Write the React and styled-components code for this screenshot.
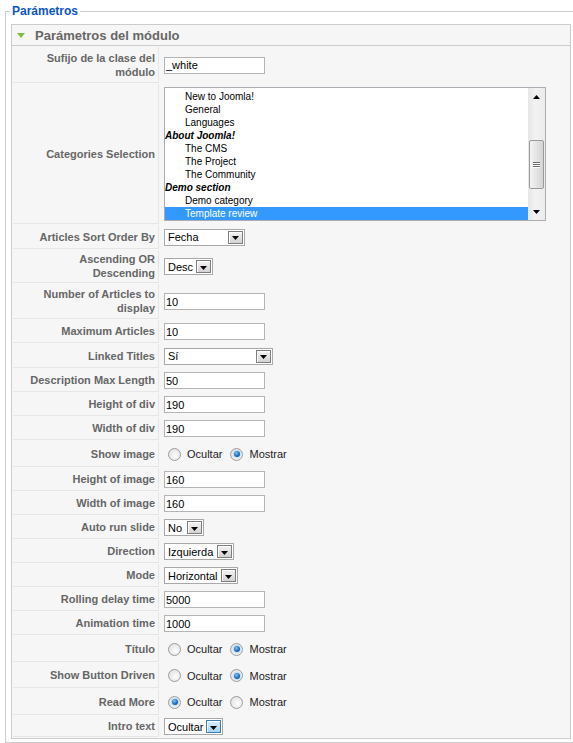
import React from 'react'
import styled, { createGlobalStyle } from 'styled-components'

const GlobalStyle = createGlobalStyle`
  html, body {
    margin: 0;
    padding: 0;
    background: #fff;
    overflow: hidden;
  }
  body {
    font-family: 'Liberation Sans', Arial, sans-serif;
    font-size: 11px;
    color: #333;
  }
`

// the right edge of the fieldset is cut off in the page, so no right border
const Fieldset = styled.fieldset`
  margin: 4px 0 0 5px;
  padding: 6px 0 3px 5px;
  width: 562px;
  border: 1px solid #ccc;
  border-right: 0;
`

const Legend = styled.legend`
  margin-left: -1px;
  padding: 0 2px;
  color: #0b55c4;
  font-size: 12px;
  font-weight: bold;
  line-height: 14px;
`

const Panel = styled.div`
  width: 558px;
  border: 1px solid #ccc;
  background: #f6f6f6;
`

const PanelTitle = styled.h3`
  display: flex;
  align-items: center;
  height: 20px;
  margin: 0;
  padding-left: 5px;
  border-bottom: 1px solid #ccc;
  color: #666;
  font-size: 13px;
  font-weight: bold;
  svg {
    margin-right: 10px;
  }
`

const ParamList = styled.div`
  display: flex;
  flex-direction: column;
  gap: 1px;
  padding: 1px;
`

const Row = styled.div`
  display: grid;
  grid-template-columns: 146px 1fr;
  column-gap: 1px;
  height: ${p => p.$h}px;
`

const Key = styled.div`
  display: flex;
  align-items: center;
  justify-content: flex-end;
  box-sizing: border-box;
  padding: 0 3px 0 6px;
  border-right: 1px solid #e6e6e6;
  border-bottom: 1px solid #e6e6e6;
  color: #666;
  font-weight: bold;
  line-height: 14px;
  text-align: right;
`

const Value = styled.div`
  display: flex;
  align-items: center;
  padding-left: 4px;
`

const TextInput = styled.input`
  width: 101px;
  height: 17px;
  box-sizing: border-box;
  margin: 0;
  padding: 0 1px;
  border: 1px solid #b4b4b4;
  background: #fff;
  font: 11px 'Liberation Sans', Arial, sans-serif;
  color: #000;
  outline: 0;
`

const Select = styled.div`
  display: flex;
  align-items: center;
  width: ${p => p.$w}px;
  height: 17px;
  box-sizing: border-box;
  border: 1px solid #a9a9a9;
  background: #fff;
  color: #000;
`

const SelectText = styled.span`
  flex: 1;
  padding-left: 3px;
  white-space: nowrap;
  overflow: hidden;
`

const DropButton = styled.span`
  display: flex;
  align-items: center;
  justify-content: center;
  flex-shrink: 0;
  width: 15px;
  height: 13px;
  margin: 0 1px 0 2px;
  box-sizing: border-box;
  border: 1px solid ${p => (p.$focus ? '#3c7fb1' : '#7e7e7e')};
  background: ${p =>
    p.$focus ? 'linear-gradient(#d9effc, #a8d2f2)' : 'linear-gradient(#f4f4f4, #d2d2d2)'};
  box-shadow: inset 1px 1px 0 #fff;
  svg {
    margin-top: 2px;
  }
`

const ListBox = styled.div`
  display: flex;
  width: 382px;
  height: 134px;
  box-sizing: border-box;
  border: 1px solid #abadb3;
  background: #fff;
`

const Options = styled.div`
  flex: 1;
  padding-top: 2px;
  overflow: hidden;
`

const Option = styled.div`
  height: 13px;
  line-height: 13px;
  padding-left: ${p => (p.$group ? 0 : 20)}px;
  font-size: 10px;
  font-weight: ${p => (p.$group ? 'bold' : 'normal')};
  font-style: ${p => (p.$group ? 'italic' : 'normal')};
  background: ${p => (p.$selected ? '#3399ff' : 'transparent')};
  color: ${p => (p.$selected ? '#fff' : '#000')};
  white-space: nowrap;
`

const ScrollBar = styled.div`
  display: flex;
  flex-direction: column;
  width: 17px;
  background: linear-gradient(90deg, #e6e6e6, #f2f2f2 40%, #ececec);
`

const ScrollArrow = styled.div`
  display: flex;
  align-items: center;
  justify-content: center;
  height: 17px;
`

const Track = styled.div`
  flex: 1;
  padding-top: 35px;
`

const Thumb = styled.div`
  display: flex;
  flex-direction: column;
  align-items: center;
  justify-content: center;
  gap: 1px;
  height: 49px;
  margin: 0 1px;
  box-sizing: border-box;
  border: 1px solid #9a9a9a;
  border-radius: 2px;
  background: linear-gradient(90deg, #f4f4f4, #e4e4e4 50%, #d4d4d4);
`

const Grip = styled.span`
  width: 7px;
  height: 1px;
  background: #6a6a6a;
  box-shadow: 0 1px 0 #fff;
`

const RadioGroup = styled.div`
  display: flex;
  align-items: center;
  gap: 4px;
`

const RadioOption = styled.label`
  display: flex;
  align-items: center;
  padding-left: 4px;
  color: #222;
  font-size: 11px;
`

const Radio = styled.span`
  display: flex;
  align-items: center;
  justify-content: center;
  width: 13px;
  height: 13px;
  margin-right: 6px;
  box-sizing: border-box;
  border: 1px solid #9c9c9c;
  border-radius: 50%;
  background: radial-gradient(circle at 60% 60%, #fdfdfd, #e2e2e2 80%);
  &::after {
    content: '';
    display: ${p => (p.$checked ? 'block' : 'none')};
    width: 6px;
    height: 6px;
    border-radius: 50%;
    background: radial-gradient(circle at 40% 35%, #7fc6f5, #1c6cb8 55%, #0c3d73);
    box-shadow: 0 0 1px 1px #b9dcf5;
  }
`

const Arrow = ({ up }) => (
  <svg width="7" height="4" viewBox="0 0 7 4">
    <polygon points={up ? '0,4 7,4 3.5,0' : '0,0 7,0 3.5,4'} fill="#000" />
  </svg>
)

const FakeSelect = ({ w, text, focus }) => (
  <Select $w={w}>
    <SelectText>{text}</SelectText>
    <DropButton $focus={focus}>
      <Arrow />
    </DropButton>
  </Select>
)

const Radios = ({ checked }) => (
  <RadioGroup>
    <RadioOption>
      <Radio $checked={checked === 0} />
      Ocultar
    </RadioOption>
    <RadioOption>
      <Radio $checked={checked === 1} />
      Mostrar
    </RadioOption>
  </RadioGroup>
)

const categories = [
  { text: 'New to Joomla!' },
  { text: 'General' },
  { text: 'Languages' },
  { text: 'About Joomla!', group: true },
  { text: 'The CMS' },
  { text: 'The Project' },
  { text: 'The Community' },
  { text: 'Demo section', group: true },
  { text: 'Demo category' },
  { text: 'Template review', selected: true },
]

const CategoryList = () => (
  <ListBox>
    <Options>
      {categories.map(c => (
        <Option key={c.text} $group={c.group} $selected={c.selected}>
          {c.text}
        </Option>
      ))}
    </Options>
    <ScrollBar>
      <ScrollArrow>
        <Arrow up />
      </ScrollArrow>
      <Track>
        <Thumb>
          <Grip />
          <Grip />
          <Grip />
        </Thumb>
      </Track>
      <ScrollArrow>
        <Arrow />
      </ScrollArrow>
    </ScrollBar>
  </ListBox>
)

const params = [
  { label: 'Sufijo de la clase del módulo', h: 36, text: '_white' },
  { label: 'Categories Selection', h: 140, list: true },
  { label: 'Articles Sort Order By', h: 24, select: 'Fecha', w: 81 },
  { label: 'Ascending OR Descending', h: 33, select: 'Desc', w: 49 },
  { label: 'Number of Articles to display', h: 35, text: '10' },
  { label: 'Maximum Articles', h: 23, text: '10' },
  { label: 'Linked Titles', h: 24, select: 'Sí', w: 109 },
  { label: 'Description Max Length', h: 23, text: '50' },
  { label: 'Height of div', h: 23, text: '190' },
  { label: 'Width of div', h: 23, text: '190' },
  { label: 'Show image', h: 26, radio: 1 },
  { label: 'Height of image', h: 23, text: '160' },
  { label: 'Width of image', h: 23, text: '160' },
  { label: 'Auto run slide', h: 23, select: 'No', w: 40 },
  { label: 'Direction', h: 23, select: 'Izquierda', w: 70 },
  { label: 'Mode', h: 23, select: 'Horizontal', w: 74 },
  { label: 'Rolling delay time', h: 23, text: '5000' },
  { label: 'Animation time', h: 23, text: '1000' },
  { label: 'Título', h: 26, radio: 1 },
  { label: 'Show Button Driven', h: 25, radio: 1 },
  { label: 'Read More', h: 26, radio: 0 },
  { label: 'Intro text', h: 21, select: 'Ocultar', w: 59, focus: true },
]

const renderValue = p => {
  if (p.list) return <CategoryList />
  if (p.select) return <FakeSelect w={p.w} text={p.select} focus={p.focus} />
  if (p.radio !== undefined) return <Radios checked={p.radio} />
  return <TextInput type="text" defaultValue={p.text} />
}

export default function App() {
  return (
    <>
      <GlobalStyle />
      <Fieldset>
        <Legend>Parámetros</Legend>
        <Panel>
          <PanelTitle>
            <svg width="8" height="5" viewBox="0 0 8 5">
              <polygon points="0,0 8,0 4,5" fill="#7cc043" />
            </svg>
            Parámetros del módulo
          </PanelTitle>
          <ParamList>
            {params.map(p => (
              <Row key={p.label} $h={p.h}>
                <Key>{p.label}</Key>
                <Value>{renderValue(p)}</Value>
              </Row>
            ))}
          </ParamList>
        </Panel>
      </Fieldset>
    </>
  )
}
